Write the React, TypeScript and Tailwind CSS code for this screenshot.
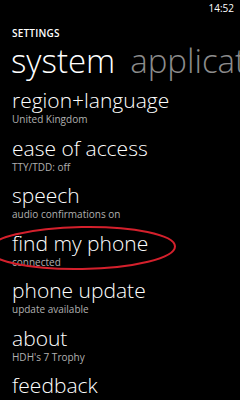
import React from 'react'

const items = [
  { title: 'region+language', sub: 'United Kingdom' },
  { title: 'ease of access', sub: 'TTY/TDD: off' },
  { title: 'speech', sub: 'audio confirmations on' },
  { title: 'find my phone', sub: 'connected' },
  { title: 'phone update', sub: 'update available' },
  { title: 'about', sub: "HDH's 7 Trophy" },
  { title: 'feedback', sub: 'disabled' },
]

export default function App() {
  return (
    <div
      className="relative h-[400px] w-[240px] overflow-hidden bg-black text-white"
      style={{ fontFamily: '"Open Sans", "Noto Sans", sans-serif' }}
    >
      {/* status bar */}
      <div className="flex h-[16px] justify-end pr-[6px] pt-[2px] text-[10px] leading-[12px]">14:52</div>

      {/* pivot header */}
      <div className="mt-[11px] pl-[12px] text-[10px] font-semibold leading-[12px] tracking-[0.2px]">SETTINGS</div>
      <div className="mt-[4px] flex gap-[15px] whitespace-nowrap pl-[11px] text-[33px] font-light leading-[36px]">
        <span>system</span>
        <span className="text-[#8c8c8c]">applications</span>
      </div>

      {/* list */}
      <div className="mt-[8px] flex flex-col pl-[12px]">
        {items.map((it) => (
          <div key={it.title} className="flex h-[47.5px] shrink-0 flex-col">
            <div className="whitespace-nowrap text-[21px] font-light leading-[26px]">{it.title}</div>
            <div className="text-[10px] leading-[12px] text-[#b0b0b0]">{it.sub}</div>
          </div>
        ))}
      </div>

      {/* red marker circle */}
      <svg className="absolute left-0 top-0" width="240" height="400" viewBox="0 0 240 400">
        <ellipse cx="82" cy="248" rx="93" ry="21" fill="none" stroke="#d4202c" strokeWidth="2" transform="rotate(-1 82 248)" />
      </svg>
    </div>
  )
}
